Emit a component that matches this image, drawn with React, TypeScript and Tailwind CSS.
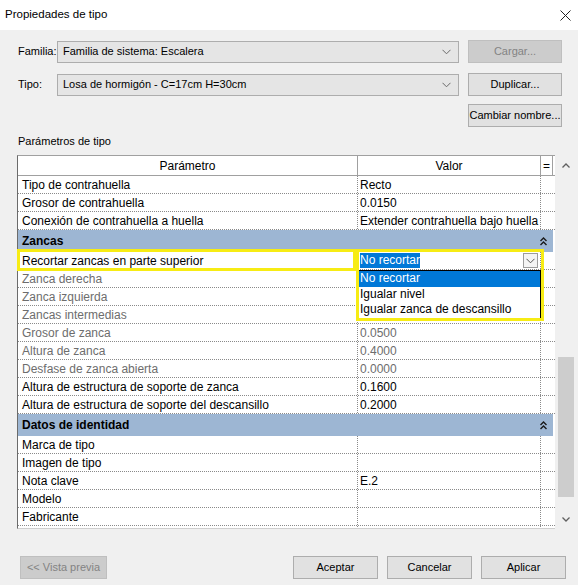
import React from 'react';

type Row =
  | { kind: 'group'; label: string }
  | { kind: 'row'; label: string; value?: string; muted?: boolean; special?: boolean };

const ROWS: Row[] = [
  { kind: 'row', label: 'Tipo de contrahuella', value: 'Recto' },
  { kind: 'row', label: 'Grosor de contrahuella', value: '0.0150' },
  { kind: 'row', label: 'Conexión de contrahuella a huella', value: 'Extender contrahuella bajo huella' },
  { kind: 'group', label: 'Zancas' },
  { kind: 'row', label: 'Recortar zancas en parte superior', special: true },
  { kind: 'row', label: 'Zanca derecha', muted: true },
  { kind: 'row', label: 'Zanca izquierda', muted: true },
  { kind: 'row', label: 'Zancas intermedias', muted: true },
  { kind: 'row', label: 'Grosor de zanca', value: '0.0500', muted: true },
  { kind: 'row', label: 'Altura de zanca', value: '0.4000', muted: true },
  { kind: 'row', label: 'Desfase de zanca abierta', value: '0.0000', muted: true },
  { kind: 'row', label: 'Altura de estructura de soporte de zanca', value: '0.1600' },
  { kind: 'row', label: 'Altura de estructura de soporte del descansillo', value: '0.2000' },
  { kind: 'group', label: 'Datos de identidad' },
  { kind: 'row', label: 'Marca de tipo' },
  { kind: 'row', label: 'Imagen de tipo' },
  { kind: 'row', label: 'Nota clave', value: 'E.2' },
  { kind: 'row', label: 'Modelo' },
  { kind: 'row', label: 'Fabricante' },
  { kind: 'row', label: '' },
];

function Chevron({ className = '' }: { className?: string }) {
  return (
    <svg width="9" height="6" viewBox="0 0 9 6" className={className}>
      <path d="M0.5 0.8 L4.5 4.8 L8.5 0.8" fill="none" stroke="currentColor" strokeWidth="1" />
    </svg>
  );
}

function DoubleUp() {
  return (
    <svg width="7" height="9" viewBox="0 0 7 9">
      <path d="M0.5 4 L3.5 1 L6.5 4 M0.5 8 L3.5 5 L6.5 8" fill="none" stroke="#1a1a1a" strokeWidth="1.4" />
    </svg>
  );
}

function Combo({ text }: { text: string }) {
  return (
    <div className="flex items-center justify-between w-[402px] h-[22px] bg-[#e5e5e5] border border-[#adadad] pl-[5px] pr-[7px]">
      <span className="text-black whitespace-nowrap">{text}</span>
      <Chevron className="text-[#6a6a6a]" />
    </div>
  );
}

function Btn({ label, disabled = false, w = 'w-[94px]' }: { label: string; disabled?: boolean; w?: string }) {
  return (
    <div
      className={`${w} h-[23px] flex items-center justify-center border whitespace-nowrap ${
        disabled ? 'bg-[#cccccc] border-[#bfbfbf] text-[#838383]' : 'bg-[#e1e1e1] border-[#adadad] text-black'
      }`}
    >
      {label}
    </div>
  );
}

export default function App() {
  return (
    <div
      className="relative w-[578px] h-[585px] bg-[#f0f0f0] text-[11px] text-black overflow-hidden whitespace-nowrap"
      style={{ fontFamily: '"Liberation Sans", Arial, sans-serif' }}
    >
      {/* Title bar */}
      <div className="h-[30px] bg-white flex items-center justify-between pl-[5px] pr-[7px]">
        <span className="text-[11.5px]">Propiedades de tipo</span>
        <svg width="11" height="11" viewBox="0 0 11 11">
          <path d="M0.5 0.5 L10.5 10.5 M10.5 0.5 L0.5 10.5" stroke="#222" strokeWidth="1" />
        </svg>
      </div>

      {/* Familia / Tipo */}
      <div className="pl-[18px] pr-[16px] pt-[10px] flex flex-col">
        <div className="flex items-center h-[23px]">
          <span className="w-[39px]">Familia:</span>
          <Combo text="Familia de sistema: Escalera" />
          <div className="ml-[9px]">
            <Btn label="Cargar..." disabled />
          </div>
        </div>
        <div className="flex items-center h-[23px] mt-[10px]">
          <span className="w-[39px]">Tipo:</span>
          <Combo text="Losa de hormigón - C=17cm H=30cm" />
          <div className="ml-[9px]">
            <Btn label="Duplicar..." />
          </div>
        </div>
        <div className="flex justify-end h-[23px] mt-[8px]">
          <Btn label="Cambiar nombre..." />
        </div>
        <div className="mt-[6px] h-[16px] leading-[16px]">Parámetros de tipo</div>
      </div>

      {/* Table + scrollbar */}
      <div className="flex mt-[6px] ml-[17px] h-[374px]">
        <div className="w-[538px] h-full bg-white border-l border-[#6b6b6b] border-t border-t-[#a0a0a0] border-b border-b-[#cfcfcf] flex flex-col overflow-hidden text-[12px]">
          {/* header */}
          <div className="flex h-[20px] shrink-0 border-b border-[#a0a0a0]">
            <div className="w-[340px] flex items-center justify-center border-r border-[#a0a0a0]">Parámetro</div>
            <div className="w-[183px] flex items-center justify-center border-r border-[#a0a0a0]">Valor</div>
            <div className="w-[12px] flex items-center justify-center border-r border-[#a0a0a0]">=</div>
          </div>
          {ROWS.map((r, i) =>
            r.kind === 'group' ? (
              <div key={i} className="flex items-center justify-between h-[22px] shrink-0 bg-[#9db6d3] pl-[4px] pr-[6px] font-bold mr-[2px]">
                <span>{r.label}</span>
                <DoubleUp />
              </div>
            ) : (
              <div key={i} className="flex h-[18px] shrink-0 border-b border-dotted border-[#8a8a8a]">
                <div className={`w-[340px] pl-[4px] flex items-center border-r border-dotted border-[#8a8a8a] ${r.muted ? 'text-[#6d6d6d]' : ''}`}>
                  {r.label}
                </div>
                <div className={`w-[183px] pl-[2px] flex items-center border-r border-dotted border-[#8a8a8a] ${r.muted ? 'text-[#6d6d6d]' : ''}`}>
                  {r.special ? (
                    <div className="flex items-center justify-between w-full pr-[2px]">
                      <span className="bg-[#0078d7] text-white leading-[15px]">No recortar</span>
                      <span className="w-[15px] h-[15px] border border-[#9c9c9c] bg-[#f4f4f4] flex items-center justify-center text-[#555]">
                        <Chevron />
                      </span>
                    </div>
                  ) : (
                    r.value
                  )}
                </div>
                <div className="w-[12px]" />
              </div>
            )
          )}
        </div>
        {/* scrollbar */}
        <div className="w-[19px] h-full ml-[1px] bg-[#f0f0f0] flex flex-col items-center">
          <div className="h-[20px] flex items-center justify-center">
            <svg width="8" height="5" viewBox="0 0 8 5">
              <path d="M0.5 4.5 L4 1 L7.5 4.5" fill="none" stroke="#606060" strokeWidth="1.3" />
            </svg>
          </div>
          <div className="flex-1 w-full flex flex-col">
            <div className="h-[182px]" />
            <div className="h-[140px] w-[16px] mx-auto bg-[#cdcdcd]" />
          </div>
          <div className="h-[20px] flex items-center justify-center">
            <svg width="8" height="5" viewBox="0 0 8 5">
              <path d="M0.5 0.5 L4 4 L7.5 0.5" fill="none" stroke="#606060" strokeWidth="1.3" />
            </svg>
          </div>
        </div>
      </div>

      {/* Bottom buttons */}
      <div className="flex items-center mt-[27px] pl-[20px] pr-[12px]">
        <Btn label="<< Vista previa" disabled w="w-[87px]" />
        <div className="flex-1" />
        <div className="flex gap-[9px]">
          <Btn label="Aceptar" w="w-[85px]" />
          <Btn label="Cancelar" w="w-[85px]" />
          <Btn label="Aplicar" w="w-[85px]" />
        </div>
      </div>

      {/* Dropdown list (overlay) */}
      <div className="absolute left-[358px] top-[270px] w-[183px] h-[49px] bg-white border border-black text-[12px] leading-[15.5px] flex flex-col">
        <div className="bg-[#0078d7] text-white pl-[1px]">No recortar</div>
        <div className="pl-[1px]">Igualar nivel</div>
        <div className="pl-[1px]">Igualar zanca de descansillo</div>
      </div>

      {/* Yellow annotation boxes */}
      <div className="absolute left-[17px] top-[249px] w-[339px] h-[22px] border-[3px] border-[#f7ec14] pointer-events-none" />
      <div className="absolute left-[356px] top-[249px] w-[188px] h-[72px] border-[3px] border-[#f7ec14] pointer-events-none" />
    </div>
  );
}
